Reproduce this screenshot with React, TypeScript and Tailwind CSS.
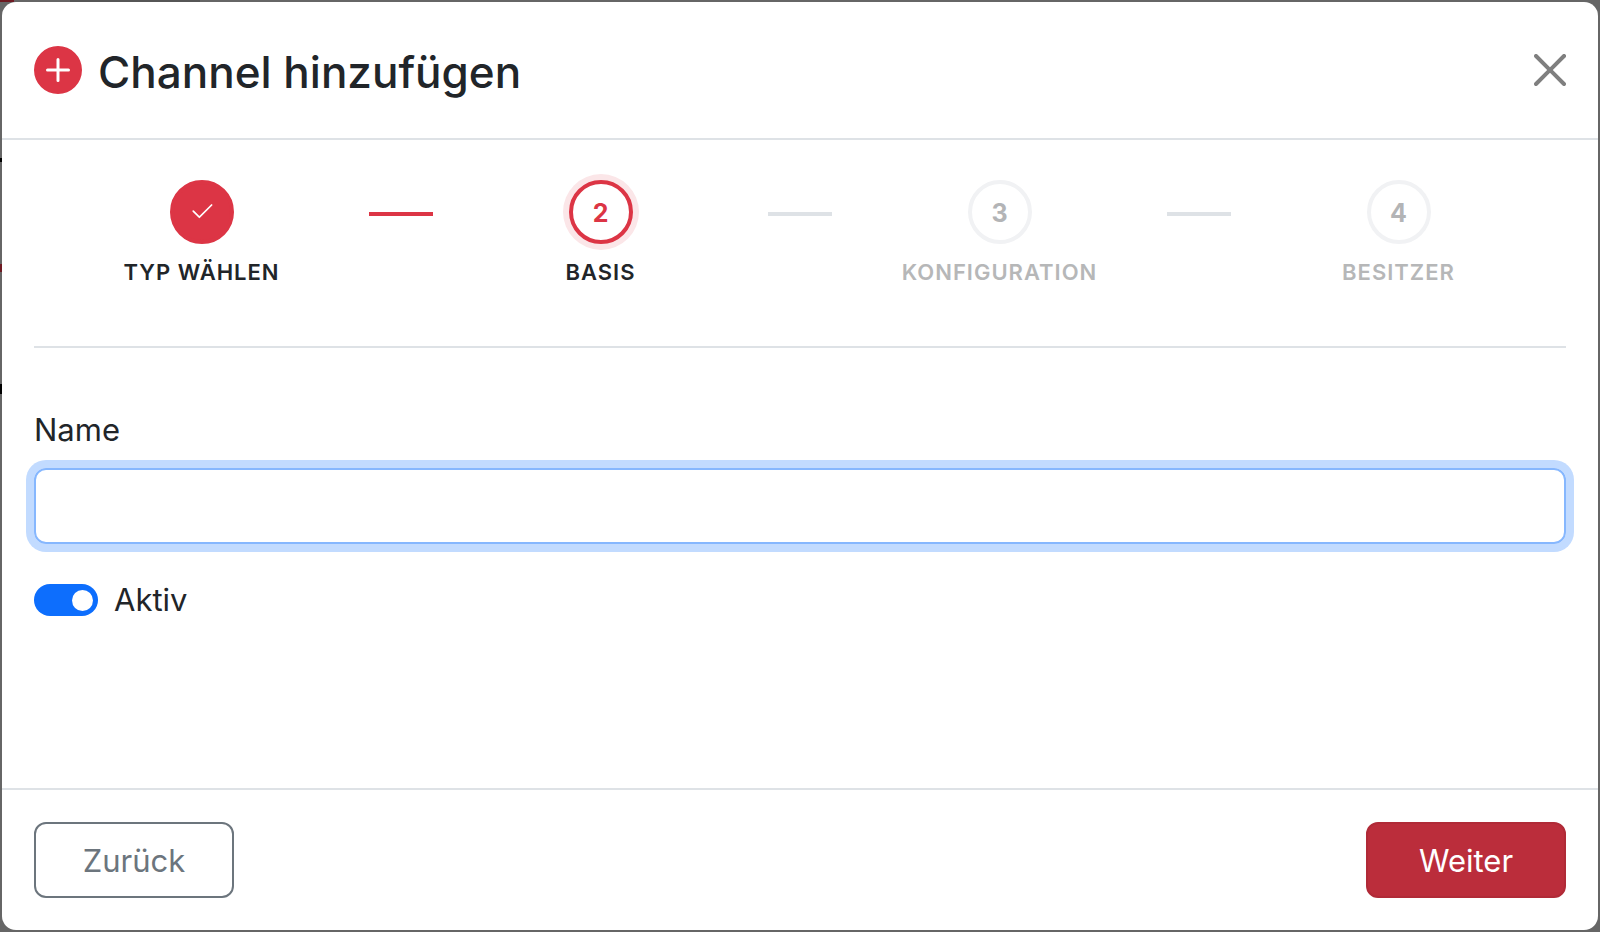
import { Fragment } from "react";
import clsx from "clsx";

type StepState = "done" | "active" | "upcoming";

type Step = {
  label: string;
  state: StepState;
};

const steps: Step[] = [
  { label: "Typ wählen", state: "done" },
  { label: "Basis", state: "active" },
  { label: "Konfiguration", state: "upcoming" },
  { label: "Besitzer", state: "upcoming" },
];

function PlusCircleIcon() {
  return (
    <svg viewBox="0 0 16 16" className="size-12 shrink-0 fill-[#dc3545]" aria-hidden="true">
      <path d="M16 8A8 8 0 1 1 0 8a8 8 0 0 1 16 0zM8.5 4.5a.5.5 0 0 0-1 0v3h-3a.5.5 0 0 0 0 1h3v3a.5.5 0 0 0 1 0v-3h3a.5.5 0 0 0 0-1h-3v-3z" />
    </svg>
  );
}

function CheckIcon() {
  return (
    <svg viewBox="0 0 16 16" className="size-7 fill-current" aria-hidden="true">
      <path d="M13.854 3.646a.5.5 0 0 1 0 .708l-7 7a.5.5 0 0 1-.708 0l-3.5-3.5a.5.5 0 1 1 .708-.708L6.5 10.293l6.646-6.647a.5.5 0 0 1 .708 0z" />
    </svg>
  );
}

function CloseIcon() {
  return (
    <svg viewBox="0 0 16 16" className="size-8 fill-[#7f7f7f]" aria-hidden="true">
      <path d="M.293.293a1 1 0 0 1 1.414 0L8 6.586 14.293.293a1 1 0 1 1 1.414 1.414L9.414 8l6.293 6.293a1 1 0 0 1-1.414 1.414L8 9.414l-6.293 6.293a1 1 0 0 1-1.414-1.414L6.586 8 .293 1.707a1 1 0 0 1 0-1.414z" />
    </svg>
  );
}

function Stepper() {
  return (
    <ol className="flex border-b-2 border-[#dee2e6] pt-10 pb-[58px]">
      {steps.map((step, index) => (
        <Fragment key={step.label}>
          {index > 0 && (
            <li
              aria-hidden="true"
              className={clsx(
                "mt-8 h-1 w-16 shrink-0",
                steps[index - 1].state === "done" ? "bg-[#dc3545]" : "bg-[#dee2e6]",
              )}
            />
          )}
          <li
            aria-current={step.state === "active" ? "step" : undefined}
            className="flex min-w-0 flex-1 basis-0 flex-col items-center"
          >
            <span
              className={clsx(
                "flex size-16 items-center justify-center rounded-full border-4 text-[25px] leading-8 font-bold",
                step.state === "done" && "border-[#dc3545] bg-[#dc3545] text-white",
                step.state === "active" &&
                  "border-[#dc3545] bg-white pt-0.5 text-[#dc3545] ring-6 ring-[#fbe6e8]",
                step.state === "upcoming" && "border-[#f1f2f4] bg-white pt-0.5 text-[#b3b4b6]",
              )}
            >
              {step.state === "done" ? <CheckIcon /> : index + 1}
            </span>
            <span
              className={clsx(
                "mt-3 text-[22px] leading-8 font-semibold tracking-[1px] uppercase",
                step.state === "upcoming" ? "text-[#b6b7b8]" : "text-[#212529]",
              )}
            >
              {step.label}
            </span>
          </li>
        </Fragment>
      ))}
    </ol>
  );
}

// What is still visible of the dimmed page around the dialog
function Backdrop() {
  return (
    <div className="absolute inset-0 bg-[#666666]" aria-hidden="true">
      <div className="absolute top-0 left-0 h-0.5 w-3.5 bg-[#6e1a22]" />
      <div className="absolute top-0 left-[70px] h-0.5 w-[130px] bg-[#565656]" />
      <div className="absolute top-[158px] left-0 h-1 w-0.5 bg-black" />
      <div className="absolute top-[264px] left-0 h-2 w-0.5 bg-[#6e1a22]" />
      <div className="absolute top-[384px] left-0 h-2.5 w-0.5 bg-black" />
    </div>
  );
}

export default function App() {
  return (
    <div className="relative flex min-h-screen flex-col p-0.5 font-[Inter,sans-serif] text-[31px] leading-12 text-[#212529]">
      <Backdrop />
      <div
        role="dialog"
        aria-labelledby="dialog-title"
        className="relative flex flex-1 flex-col rounded-[14px] bg-white"
      >
        <header className="flex items-center justify-between border-b-2 border-[#dee2e6] px-8 py-9">
          <div className="flex items-center gap-4">
            <PlusCircleIcon />
            <h1 id="dialog-title" className="pt-1 text-[44px] leading-15 font-medium">
              Channel hinzufügen
            </h1>
          </div>
          <button type="button" aria-label="Schließen">
            <CloseIcon />
          </button>
        </header>

        <form className="flex flex-1 flex-col">
          <div className="flex-1 px-8">
            <Stepper />
            <div className="flex flex-col gap-3.5 pt-[58px]">
              <label htmlFor="channel-name">Name</label>
              <input
                id="channel-name"
                type="text"
                className="h-19 w-full rounded-xl border-2 border-[#86b7fe] px-6 ring-8 ring-[#c2dbff] outline-none"
              />
            </div>
            <div className="mt-8 flex items-center gap-4">
              <input
                id="channel-active"
                type="checkbox"
                role="switch"
                defaultChecked
                className="flex h-8 w-16 appearance-none items-center rounded-full bg-[#ced4da] px-[5px] before:size-[21px] before:rounded-full before:bg-white checked:justify-end checked:bg-[#0d6efd]"
              />
              <label htmlFor="channel-active">Aktiv</label>
            </div>
          </div>

          <footer className="flex justify-between border-t-2 border-[#dee2e6] p-8">
            <button
              type="button"
              className="h-19 w-50 rounded-xl border-2 border-[#6c757d] pt-0.5 text-[#6c757d]"
            >
              Zurück
            </button>
            <button
              type="submit"
              className="h-19 w-50 rounded-xl border-2 border-[#b02a37] bg-[#bb2d3b] pt-0.5 text-white"
            >
              Weiter
            </button>
          </footer>
        </form>
      </div>
    </div>
  );
}
